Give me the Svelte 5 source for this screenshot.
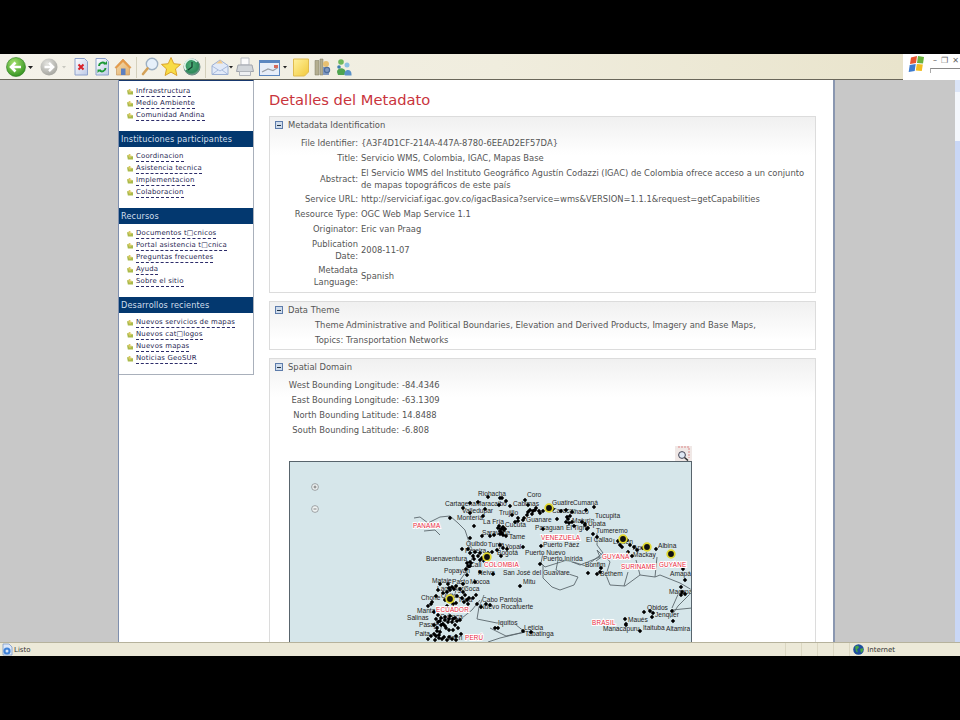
<script>
  const sections = [
    { title: null, items: ['Infraestructura', 'Medio Ambiente', 'Comunidad Andina'] },
    { title: 'Instituciones participantes', items: ['Coordinacion', 'Asistencia tecnica', 'Implementacion', 'Colaboracion'] },
    { title: 'Recursos', items: ['Documentos t□cnicos', 'Portal asistencia t□cnica', 'Preguntas frecuentes', 'Ayuda', 'Sobre el sitio'] },
    { title: 'Desarrollos recientes', items: ['Nuevos servicios de mapas', 'Nuevos cat□logos', 'Nuevos mapas', 'Noticias GeoSUR'] }
  ];
  const ident = [
    ['File Identifier:', '{A3F4D1CF-214A-447A-8780-6EEAD2EF57DA}'],
    ['Title:', 'Servicio WMS, Colombia, IGAC, Mapas Base'],
    ['Abstract:', 'El Servicio WMS del Instituto Geográfico Agustín Codazzi (IGAC) de Colombia ofrece acceso a un conjunto de mapas topográficos de este país'],
    ['Service URL:', 'http://serviciaf.igac.gov.co/igacBasica?service=wms&VERSION=1.1.1&request=getCapabilities'],
    ['Resource Type:', 'OGC Web Map Service 1.1'],
    ['Originator:', 'Eric van Praag'],
    ['Publication Date:', '2008-11-07'],
    ['Metadata Language:', 'Spanish']
  ];
  const bounds = [
    ['West Bounding Longitude:', '-84.4346'],
    ['East Bounding Longitude:', '-63.1309'],
    ['North Bounding Latitude:', '14.8488'],
    ['South Bounding Latitude:', '-6.808']
  ];
  const places = [
    ['Riohacha',478,493],['Coro',527,494],['Cartagena',445,503],['Maracaibo',476,503],['Cabimas',513,503],['Guatire',552,502],['Cumaná',573,502],
    ['Valledupar',462,510],['Trujillo',499,512],['Caracas',552,510],['Anaco',570,511],['Montería',457,517],['Tucupita',595,515],['La Fría',483,521],['Guanare',526,519],['Maturín',572,520],
    ['Cucuta',505,524],['Upata',588,523],['Paraguan',535,527],['El Tigre',566,527],['Tumeremo',596,530],['Saravena',482,532],['Tame',509,536],['El Callao',586,539],['Linden',613,541],
    ['Quibdo',466,543],['Tunja',488,544],['Yopal',505,546],['Puerto Páez',543,544],['Apura',633,547],['Albina',658,545],['Pereira',465,550],['Bogotá',497,552],['Puerto Nuevo',525,552],['Mackay',633,554],
    ['Buenaventura',426,558],['Puerto Inírida',543,558],['Cali',470,564],['Bonfim',585,564],['Popayan',444,570],['Neiva',478,572],['San José del Guaviare',503,572],['Bethem',600,573],['Amapá',670,573],
    ['Mataje',432,580],['Pasto',452,581],['Mocoa',470,581],['Mitu',523,581],['Macapá',669,591],['Lago Agrio',437,588],['Coca',464,588],['Quito',441,595],['Chone',421,597],['Tena',458,599],['Cabo Pantoja',482,599],
    ['Nuevo Rocafuerte',480,606],['Obidos',647,607],['Manta',417,610],['Jenquer',655,614],['Salinas',407,617],['Cuenca',440,616],['Maués',628,619],['Iquitos',498,622],['Pasaje',419,624],
    ['Leticia',524,627],['Manacapuru',603,628],['Itaituba',643,627],['Altamira',666,628],['Tabatinga',525,633],['Paita',415,633],['Jaén',448,637]
  ];
  const countries = [
    ['PANAMA',413,525],['VENEZUELA',541,537],['GUYANA',602,556],['COLOMBIA',484,564],['GUYANE',659,564],['SURINAME',621,566],['ECUADOR',436,609],['BRASIL',592,622],['PERÚ',465,637]
  ];
  const pts = `488,497 502,498 506,501 510,506 499,505 485,509 470,503 478,502 470,513 463,508 450,518 483,516 474,526 500,498 525,500 528,505 530,510 533,511 527,515 524,518 518,518 512,515 515,522
    535,510 539,511 543,511 553,509 561,511 566,510 572,512 586,510 594,507 570,516 568,519 566,522 572,522 557,519 582,522 585,525 588,528 593,534 597,537 543,529 523,520 518,521 504,530 500,531 502,533 506,536 490,536 494,535 498,528 499,526
    503,527 501,529 505,529 500,534 503,535 528,512 532,514 536,508 540,513 567,517 569,523 574,526 585,524 587,529
    470,538 482,536 462,549 468,549 470,553 473,556 474,559 480,560 484,561 470,562 471,563 468,566 466,569 488,553 492,552 500,545 503,548 501,556 497,550 507,549 523,547 541,546 540,564 480,572 493,574 520,586 588,573 601,568 600,572 597,574
    478,556 480,553 482,558 475,552 467,563 470,566
    467,575 463,584 475,582 456,586 454,589 450,590 447,592 443,593 438,590 440,584 457,596 462,598 468,604 476,595 473,598 432,602 436,596 445,600 453,604 456,603 447,606 477,604 481,607 486,604 490,605 498,628
    448,584 449,588 452,587 460,589 463,592 465,595 467,600 464,602 469,598
    431,604 428,606 434,612 438,615 441,618 445,617 450,616 455,618 460,620 438,622 443,624 448,622 452,622 455,625 446,628 449,630 453,630 458,628 434,625 437,628 440,632 431,636 436,636 444,637 449,637 456,636 461,634 428,639
    436,619 440,621 445,620 449,619 453,619 457,621 441,625 445,626 437,631 434,634 439,635 442,639 447,640 452,639 435,640 439,638 456,640
    618,541 620,545 622,547 627,540 630,545 634,547 637,550 643,548 628,552 632,556 656,549 671,556 683,569 685,580 681,587 685,594 682,592 681,595 644,612 650,611 653,613 652,617 672,611 673,621 625,619 626,625 640,631 626,624 523,631 531,632 495,628`
    .trim().split(/\s+/).map((p) => p.split(',').map(Number));
  const diamonds = pts.map(([x, y]) => `M${x} ${y - 2.2}l2.2 2.2-2.2 2.2-2.2-2.2z`).join('');
  const capitals = [[487,557],[450,599],[549,508],[623,539],[647,547],[671,554]];
</script>

<div class="screen">
  <div class="band"></div>
  <div class="chrome">
    <div class="toolbar">
      <svg width="360" height="26" viewBox="0 0 360 26" aria-hidden="true">
        <defs>
          <radialGradient id="gb" cx="40%" cy="30%" r="75%"><stop offset="0" stop-color="#a6e36f"/><stop offset="1" stop-color="#2f8f1e"/></radialGradient>
          <radialGradient id="gg" cx="40%" cy="30%" r="75%"><stop offset="0" stop-color="#e4e4e0"/><stop offset="1" stop-color="#a2a29c"/></radialGradient>
          <linearGradient id="pg" x1="0" y1="0" x2="1" y2="1"><stop offset="0" stop-color="#fff"/><stop offset="1" stop-color="#bcc9e6"/></linearGradient>
          <linearGradient id="ng" x1="0" y1="0" x2="1" y2="1"><stop offset="0" stop-color="#fff2a0"/><stop offset="1" stop-color="#f2c93a"/></linearGradient>
          <linearGradient id="hg" x1="0" y1="0" x2="1" y2="1"><stop offset="0" stop-color="#f3dfb4"/><stop offset="1" stop-color="#e5ad67"/></linearGradient>
          <radialGradient id="cg" cx="45%" cy="40%" r="65%"><stop offset="0" stop-color="#4fb07a"/><stop offset=".7" stop-color="#2f8a5a"/><stop offset="1" stop-color="#9aa8a8"/></radialGradient>
        </defs>
        <circle cx="16" cy="13" r="9.5" fill="url(#gb)" stroke="#2a7a1c" stroke-width=".6"/>
        <path d="M21 13H12M15.5 8.5 11 13l4.5 4.5" fill="none" stroke="#fff" stroke-width="2.6"/>
        <path d="M28 12h5l-2.5 3z" fill="#222"/>
        <circle cx="49" cy="13" r="8.5" fill="url(#gg)"/>
        <path d="M44.5 13H52M49 8.8 53.2 13 49 17.2" fill="none" stroke="#fff" stroke-width="2.4"/>
        <path d="M62 12h4l-2 2.5z" fill="#c8c8c0"/>
        <path d="M75 4.5h9.5l3 3V21H75z" fill="url(#pg)" stroke="#8ea2cc"/>
        <path d="M78.500 10.500l5 5M83.500 10.500l-5 5" stroke="#d8222a" stroke-width="2"/>
        <path d="M96 4.500h9.500l3 3V21H96z" fill="url(#pg)" stroke="#8ea2cc"/>
        <path d="M99 12a3.500 3.500 0 0 1 6-2.300M105.500 14a3.500 3.500 0 0 1-6 2.300" fill="none" stroke="#1e9a38" stroke-width="2"/>
        <path d="M103.500 10.500h3.500V7zM101 15.500h-3.500V19z" fill="#1e9a38"/>
        <path d="M115 13.500 123 5l8 8.500-1.500 1v6.500h-13v-6.500z" fill="url(#hg)" stroke="#c79a62" stroke-width=".7"/>
        <path d="M115 13.500 123 5l8 8.500-1.500 1-6.500-6.500-6.500 6.500z" fill="#e59a4a"/>
        <rect x="121" y="14.500" width="4.500" height="6.500" fill="#5d80c0"/>
        <path d="M136.500 3v21" stroke="#d4d0bc"/>
        <circle cx="152" cy="10" r="5.700" fill="#e6f0fa" stroke="#9cafc2" stroke-width="1.400"/>
        <path d="M147.500 14.500 143 20" stroke="#d4a258" stroke-width="2.600" stroke-linecap="round"/>
        <path d="M171 3.500l2.800 6.200 6.700.7-5 4.500 1.400 6.600-5.900-3.400-5.900 3.400 1.400-6.600-5-4.500 6.700-.7z" fill="#f8dc46" stroke="#d79b1c" stroke-width=".9"/>
        <circle cx="192" cy="13" r="8" fill="url(#cg)" stroke="#6b8a84"/>
        <path d="M186 16a6.500 6.500 0 0 1 11-8" fill="none" stroke="#dcf2e8" stroke-width="1.800"/>
        <path d="M192 8v5l-4 3" fill="none" stroke="#153f2f" stroke-width="1.300"/>
        <path d="M205.500 3v21" stroke="#d4d0bc"/>
        <path d="M212 11.500 220 6l8 5.500V20.500h-16z" fill="#e2eaf8" stroke="#9cb0d4"/>
        <path d="M212 12l8 5 8-5M212 20.500l6-4.500M228 20.500l-6-4.500" fill="none" stroke="#9cb0d4" stroke-width=".8"/>
        <path d="M216 9.500h7l-2.500-3.500z" fill="#f2c98a"/>
        <path d="M229 12h4l-2 2.500z" fill="#222"/>
        <path d="M241 4h8v7h-8z" fill="#fbfbfb" stroke="#b7bbc2"/>
        <path d="M238 11h14l1.500 6.500h-17z" fill="#d2d6da" stroke="#a0a4ac"/>
        <path d="M239.500 17.500h11v4h-11z" fill="#eef0f2" stroke="#b0b4ba"/>
        <rect x="259.500" y="6.500" width="20" height="15" fill="#e6edf8" stroke="#5a86c0"/>
        <rect x="259.500" y="6.500" width="20" height="2.500" fill="#5a86c0"/>
        <path d="M262 18l6-3 5 1.500 5-3" fill="none" stroke="#9a9fa6" stroke-width="1.200"/>
        <path d="M274 11h4v3h-4z" fill="#d86a5a"/>
        <path d="M283 12h4l-2 2.500z" fill="#222"/>
        <path d="M293.500 5h15v13l-4 4h-11z" fill="url(#ng)" stroke="#e0bc50"/>
        <path d="M315 6.500h4v14.500h-4zM320 5h3v16h-3z" fill="#b4ae90" stroke="#7d7860" stroke-width=".5"/>
        <circle cx="326" cy="10" r="3" fill="#e8c070"/>
        <path d="M323 13h6v8h-6z" fill="#8098c0"/>
        <circle cx="327" cy="16" r="2.600" fill="none" stroke="#4f6f9c" stroke-width="1.200"/>
        <circle cx="341" cy="8" r="2.800" fill="#6fb85a"/><path d="M337 18c0-5 8.500-5 8.500 0l-1 3h-6.500z" fill="#4fa450"/>
        <circle cx="347" cy="11" r="2.500" fill="#8cc0e4"/><path d="M344.500 21c-1-6 7-7 7-1v1.500h-6z" fill="#5a92c8"/>
        <circle cx="339" cy="13" r="1.800" fill="#3d7fae"/>
      </svg>
    </div>
    <div class="corner">
      <svg width="20" height="20" viewBox="0 0 20 20" aria-hidden="true">
        <path d="M4 3.500 10 2l-1 7-6 1z" fill="#e8552f"/>
        <path d="M11 2l6 1-1 6.500-6-.5z" fill="#6bb33c"/>
        <path d="M2.700 11l6-1-1 7-6 1z" fill="#3d7bd0"/>
        <path d="M9.800 10l6 .5-1 6.500-6-.5z" fill="#f2bd1f"/>
      </svg>
      <div class="win">
        <div class="winbtns"><span>–</span><span>❐</span><span>✕</span></div>
        <div class="addr"></div>
      </div>
    </div>
  </div>

  <div class="view">
    <div class="gutter left"></div>
    <div class="page">
      <nav class="side">
        {#each sections as s}
          {#if s.title}<h3>{s.title}</h3>{/if}
          <ul>
            {#each s.items as it}
              <li>
                <svg width="6" height="6" viewBox="0 0 7 7" aria-hidden="true"><path d="M0 1.500h3l1 1h3v4H1z" fill="#a9ba4a"/><path d="M2 0h2v2h2L3.500 5 1 2h1z" fill="#d8c860"/></svg>
                <a href="#top">{it}</a>
              </li>
            {/each}
          </ul>
        {/each}
      </nav>
      <main class="main">
        <h1>Detalles del Metadato</h1>

        <section class="panel">
          <header><i class="minus"></i>Metadata Identification</header>
          <div class="grid ident">
            {#each ident as [k, v]}
              <div class="k">{k}</div><div class="v">{v}</div>
            {/each}
          </div>
        </section>

        <section class="panel">
          <header><i class="minus"></i>Data Theme</header>
          <div class="grid theme">
            <div class="k">Theme Topics:</div>
            <div class="v">Administrative and Political Boundaries, Elevation and Derived Products, Imagery and Base Maps, Transportation Networks</div>
          </div>
        </section>

        <section class="panel last">
          <header><i class="minus"></i>Spatial Domain</header>
          <div class="grid spatial">
            {#each bounds as [k, v]}
              <div class="k">{k}</div><div class="v">{v}</div>
            {/each}
          </div>
          <div class="mapwrap">
            <div class="maptool">
              <svg width="17" height="15" viewBox="0 0 17 15" aria-hidden="true">
                <rect x="0" y="0" width="17" height="15" fill="#f0e8e6"/>
                <path d="M3 1h11v11" fill="none" stroke="#d88" stroke-dasharray="2 1"/>
                <circle cx="7" cy="9" r="3.400" fill="#dfe8f4" stroke="#445"/>
                <path d="M9.500 11.500 13 14.500" stroke="#333" stroke-width="1.600"/>
              </svg>
            </div>
            <div class="map">
              <svg width="401" height="180" viewBox="290 462 401 180" aria-hidden="true">
                <g fill="none" stroke="#5b666c" stroke-width=".9">
                  <path d="M414 518l6-1 8 6 12-6 10-1 8 7 7 7 5 15 4 8-6 16-10 14-4 14-3 14-8 10-5 18"/>
                  <path d="M424 531l11-1 5 5"/>
                  <path d="M480 600l-8 10-10 8-8 4"/>
                  <path d="M484 595l-5 12-2 12 20 4 14-2 14 11-25 6-12 4"/>
                  <path d="M543 553l-2 10 4 4 22-7 13 5 20-8-3-7 6 6-7 5"/>
                  <path d="M597 533l0 12 6 8-17 13-16-5-12-1-2 10 22 7-4 8-14 5-8-3-9-9v-13"/>
                  <path d="M603 553l7 9-4 13 4 10 15 1 15-11 15 2 5-2 20 8 12 7"/>
                  <path d="M655 577l2-20"/>
                  <path d="M692 592l-14 14-8 12M672 610l20-2M680 590l-8 18"/>
                  <path d="M624 586l4-14M640 575l-4-15"/>
                  <path d="M490 628l16 8 19-4"/>
                </g>
                <g class="place">
                  {#each places as [t, x, y]}<text x={x} y={y + 2.500}>{t}</text>{/each}
                </g>
                <path d={diamonds} fill="#000"/>
                {#each capitals as [x, y]}
                  <circle cx={x} cy={y} r="3.800" fill="#111" stroke="#e2d92e" stroke-width="1.800"/>
                {/each}
                <g class="country">
                  {#each countries as [t, x, y]}<text x={x} y={y + 2.500}>{t}</text>{/each}
                </g>
                <g fill="#eef2f2" stroke="#8a8f92" stroke-width=".8">
                  <circle cx="315" cy="487" r="3.400"/>
                  <circle cx="315" cy="509" r="3.400"/>
                </g>
                <path d="M313.500 487h3M315 485.500v3M313.500 509h3" stroke="#555" stroke-width=".7"/>
              </svg>
            </div>
          </div>
        </section>
      </main>
    </div>
    <div class="gutter right"></div>
    <div class="scroll"><b class="up"></b><b class="thumb"></b></div>
  </div>

  <div class="status">
    <svg width="12" height="13" viewBox="0 0 12 13" aria-hidden="true">
      <path d="M2 1h6l3 3v8H2z" fill="#dce8fa" stroke="#6f8fc4" stroke-width=".7"/>
      <circle cx="6" cy="8" r="3.600" fill="#3f82d8"/>
      <circle cx="6" cy="8" r="1.500" fill="#dce8fa"/>
    </svg>
    <span class="listo">Listo</span>
    <div class="cells"><i></i><i></i><i></i><i></i><i></i></div>
    <svg class="globe" width="11" height="11" viewBox="0 0 11 11" aria-hidden="true">
      <circle cx="5.500" cy="5.500" r="5.300" fill="#1f4f9e"/>
      <path d="M2 2.500l3-1 1 2-2 2 1 3-2-1zM7 5l3-1 0 3-2 2z" fill="#46a646"/>
    </svg>
    <span class="zone">Internet</span>
  </div>
</div>

<style>
  :global(body) { margin: 0; background: #000; }
  .screen { width: 960px; height: 720px; overflow: hidden; display: flex; flex-direction: column; background: #000; font-family: "DejaVu Sans", sans-serif; }
  .band { height: 54px; flex: none; }

  .chrome { height: 26px; flex: none; display: flex; }
  .toolbar { flex: 1; background: linear-gradient(90deg, #f4f2ea, #f0edde 55%, #e9e4cc); border-bottom: 1px solid #6a675a; box-sizing: border-box; height: 26px; }
  .toolbar svg { display: block; }
  .corner { width: 57px; background: #fff; display: flex; padding: 0 0 0 4px; box-sizing: border-box; gap: 3px; }
  .win { flex: 1; }
  .winbtns { display: flex; gap: 4px; font-size: 8px; line-height: 14px; color: #666; padding-left: 3px; height: 14px; white-space: nowrap; }
  .addr { border-top: 1px solid #888; border-left: 1px solid #aaa; height: 4px; }

  .view { height: 562px; flex: none; display: flex; background: #c8c8c8; }
  .gutter.left { width: 118px; flex: none; }
  .gutter.right { width: 120px; flex: none; }
  .page { width: 717px; flex: none; box-sizing: border-box; display: flex; background: #fff; border-left: 1px solid #7f8fae; border-right: 2px solid #8a97b0; overflow: hidden; }

  .side { width: 135px; flex: none; box-sizing: border-box; height: 295px; border-top: 1px solid #17386e; border-right: 1px solid #a9b0bb; border-bottom: 1px solid #a9b0bb; padding-top: 4px; }
  .side h3 { margin: 0; height: 16px; background: #03386f; color: #cfdeec; font-size: 8.200px; font-weight: normal; line-height: 16px; padding-left: 2px; letter-spacing: .1px; white-space: nowrap; }
  .side ul { list-style: none; margin: 0; padding: 1px 0 9px 8px; }
  .side h3 + ul { padding-top: 4px; }
  .side li { height: 12px; display: flex; align-items: center; gap: 2px; white-space: nowrap; }
  .side li svg { flex: none; }
  .side a { margin-left: 1px; color: #1e1e50; font-size: 6.900px; line-height: 9px; letter-spacing: .2px; text-decoration: none; border-bottom: 1px dashed #2c2c6a; }

  .main { flex: 1; padding: 0 17px 0 15px; min-width: 0; }
  h1 { margin: 11px 0 8px; font-size: 14.700px; line-height: 17px; font-weight: normal; color: #c9343c; white-space: nowrap; }

  .panel { border: 1px solid #dcdcdc; background: linear-gradient(#f0f0f0, #fff 38px); margin-bottom: 8px; font-size: 8.380px; color: #555; }
  .panel header { height: 16px; display: flex; align-items: center; padding-left: 5px; gap: 5px; }
  .minus { width: 8px; height: 8px; box-sizing: border-box; border: 1px solid #5d7cab; background: #cfdcec; position: relative; }
  .minus::after { content: ""; position: absolute; left: 1px; right: 1px; top: 2.500px; height: 1px; background: #234; }
  .grid { display: grid; column-gap: 3px; line-height: 12px; }
  .k { text-align: right; align-self: center; }
  .v { align-self: center; }
  .ident { grid-template-columns: 70px 1fr; padding: 4px 8px 4px 18px; row-gap: 2.750px; }
  .theme { grid-template-columns: 28px 1fr; padding: 0 6px 1px 45px; line-height: 15px; }
  .theme .k, .theme .v { align-self: start; }
  .spatial { grid-template-columns: 129px 1fr; row-gap: 3px; padding-top: 4px; }
  .last { margin: 0; border-bottom: none; height: 400px; }
  .mapwrap { width: 403px; margin: 10px 0 0 19px; display: flex; flex-direction: column; }
  .maptool { align-self: flex-end; height: 15px; }
  .maptool svg { display: block; }
  .map { border: 1px solid #58646c; background: #d6e6ea; height: 180px; overflow: hidden; }
  .map svg { display: block; }
  .place text { font: 6.600px "Liberation Sans", sans-serif; fill: #222; paint-order: stroke; stroke: #d6e6ea; stroke-width: .8px; }
  .country text { font: 6.300px "Liberation Sans", sans-serif; fill: #ea1f3c; letter-spacing: .2px; paint-order: stroke; stroke: #fff; stroke-width: 1.800px; }

  .scroll { flex: 1; background: #f4f7fc; display: flex; flex-direction: column; }
  .up { height: 12px; background: #dbe5f8; }
  .thumb { margin-top: 49px; flex: 1; background: #c9d7f6; }

  .status { height: 14px; flex: none; box-sizing: border-box; background: #ece9d8; border-top: 1px solid #b6b29c; display: flex; align-items: center; padding-left: 1px; font-size: 7px; color: #333; white-space: nowrap; }
  .listo { margin-left: 1px; }
  .cells { margin-left: auto; width: 73px; height: 100%; display: flex; }
  .cells i { width: 16px; flex: none; border-right: 1px solid #dbd7c2; box-sizing: border-box; }
  .cells i:first-child { width: 9px; }
  .globe { margin-left: 3px; }
  .zone { margin: 0 65px 0 3px; }
</style>
